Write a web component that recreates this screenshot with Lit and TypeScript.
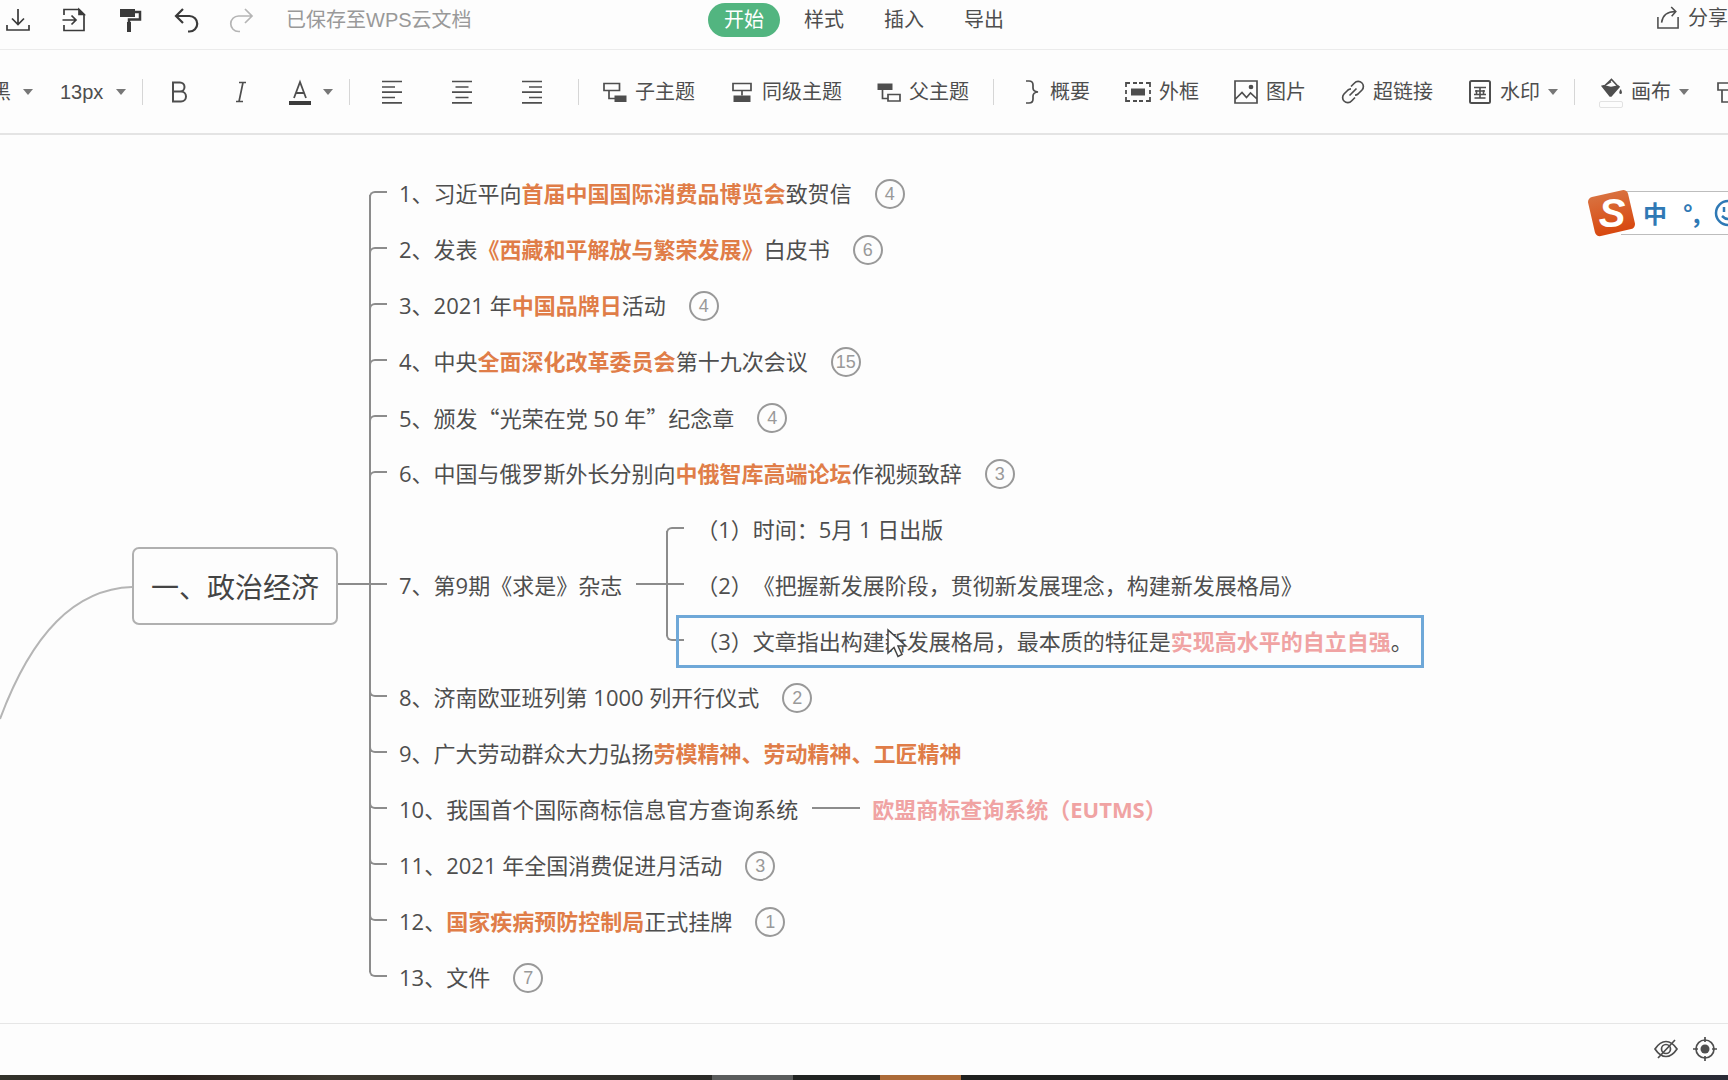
import { LitElement, html, svg, css, nothing, TemplateResult } from "lit";
import { customElement, property, state } from "lit/decorators.js";

type Tone = "orange" | "pink" | "quote";
type Run = string | [Tone, string];

interface Topic {
  runs: Run[];
  count?: number;
  children?: Topic[];
  selected?: boolean;
}

const topics: Topic[] = [
  { runs: ["1、习近平向", ["orange", "首届中国国际消费品博览会"], "致贺信"], count: 4 },
  { runs: ["2、发表", ["orange", "《西藏和平解放与繁荣发展》"], "白皮书"], count: 6 },
  { runs: ["3、2021 年", ["orange", "中国品牌日"], "活动"], count: 4 },
  { runs: ["4、中央", ["orange", "全面深化改革委员会"], "第十九次会议"], count: 15 },
  { runs: ["5、颁发", ["quote", "“"], "光荣在党 50 年", ["quote", "”"], "纪念章"], count: 4 },
  { runs: ["6、中国与俄罗斯外长分别向", ["orange", "中俄智库高端论坛"], "作视频致辞"], count: 3 },
  {
    runs: ["7、第9期《求是》杂志"],
    children: [
      { runs: ["（1）时间：5月 1 日出版"] },
      { runs: ["（2）《把握新发展阶段，贯彻新发展理念，构建新发展格局》"] },
      {
        runs: ["（3）文章指出构建新发展格局，最本质的特征是", ["pink", "实现高水平的自立自强"], "。"],
        selected: true,
      },
    ],
  },
  { runs: ["8、济南欧亚班列第 1000 列开行仪式"], count: 2 },
  { runs: ["9、广大劳动群众大力弘扬", ["orange", "劳模精神、劳动精神、工匠精神"]] },
  { runs: ["10、我国首个国际商标信息官方查询系统"], children: [{ runs: [["pink", "欧盟商标查询系统（EUTMS）"]] }] },
  { runs: ["11、2021 年全国消费促进月活动"], count: 3 },
  { runs: ["12、", ["orange", "国家疾病预防控制局"], "正式挂牌"], count: 1 },
  { runs: ["13、文件"], count: 7 },
];

const shapes: Record<string, TemplateResult> = {
  download: svg`<path d="M12 1v15M6 10.5l6 6 6-6M1 17v5h22v-5"/>`,
  exportDoc: svg`<path d="M2 7V1.5h15l5 5V22.5H2V17M0.500 12h13M9.500 7.500l4.500 4.500-4.500 4.500"/><path d="M17 1.500v5h5z" fill="currentColor"/>`,
  brush: svg`<path d="M2 1h15v8H2zM9 14h4v10H9z" fill="currentColor" stroke="none"/><path d="M17 4h5v7.500H11V15" stroke-width="2.500"/>`,
  undo: svg`<path d="M9 1L2 8l7 7M2 8h13.500a7.500 7.500 0 0 1 0 15.500H14" stroke-width="2.200"/>`,
  redo: svg`<path d="M15 1l7 7-7 7M22 8H8.500a7.500 7.500 0 0 0 0 15.500H10"/>`,
  share: svg`<path d="M1 11v12h22V11M5 17C6 10 11 5 20 5M15.500 0L20.500 5 16 10"/>`,
  bold: svg`<path d="M5 2.500h7a4.500 4.500 0 0 1 0 9H5zM5 11.500h8a5 5 0 0 1 0 10H5z" stroke-width="2"/>`,
  italic: svg`<path d="M10 2.500h7M7 21.500h7M14 2.500l-4 19"/>`,
  alignLeft: svg`<path d="M2 1.500h20M2 7h13M2 12.200h20M2 17.500h13M2 22.800h20"/>`,
  alignCenter: svg`<path d="M2 1.500h20M5.500 7h13M2 12.200h20M5.500 17.500h13M2 22.800h20"/>`,
  alignRight: svg`<path d="M2 1.500h20M9 7h13M2 12.200h20M9 17.500h13M2 22.800h20"/>`,
  child: svg`<path d="M1 3.500h15.500v7H1zM6 10.500v8h6"/><path d="M11.500 15.500h12V22h-12z" fill="currentColor" stroke="none"/>`,
  sibling: svg`<path d="M3 3.500h18v7H3zM12 10.500v5"/><path d="M3.500 15.500h17V22h-17z" fill="currentColor" stroke="none"/>`,
  parent: svg`<path d="M0.500 3.500h15V10h-15z" fill="currentColor" stroke="none"/><path d="M5.500 10v8.500H11M11 14.500h12v6.500H11z"/>`,
  brace: svg`<path d="M8 1h3q4 0 4 4v3q0 3.500 5 4-5 .500-5 4v3q0 4-4 4H8"/>`,
  image: svg`<path d="M1 1h22v22H1zM1 19.500l7-7 4.500 5 4-4.500 6.500 6"/><circle cx="17" cy="7" r="1.500" fill="currentColor"/>`,
  link: svg`<path d="M10 6.500l3.500-3.500a5 5 0 0 1 7.500 7l-4 4a5 5 0 0 1-3 1.200M14 17.500L10.500 21A5 5 0 0 1 3 14l4-4a5 5 0 0 1 3-1.200M8.500 15.500l7-7"/>`,
  watermark: svg`<rect x="2" y="1" width="20" height="22" rx="1.500" stroke-width="2"/><path d="M6 7.500h12M7 11h10M6 14.500h12M6.500 18h11M12 7v11M8.500 10v5M15.500 10v5" stroke-width="1.600"/>`,
  canvas: svg`<path d="M4 9.500L12.500 1.500l7 7.500M7 7l5-3"/><path d="M1 8.500l3-1 8 2 8-1.500 2 1.500-9.500 11h-2zM23 12.500q2 5-.500 5t-.500-5z" fill="currentColor" stroke="none"/>`,
  eyeOff: svg`<path d="M1 12Q6 4.500 12 4.500T23 12Q18 19.500 12 19.500T1 12zM4 21L21 3"/><circle cx="12" cy="12" r="4.500"/>`,
  target: svg`<circle cx="12" cy="12" r="9"/><circle cx="12" cy="12" r="4.500" fill="currentColor" stroke="none"/><path d="M12 0v5M12 19v5M0 12h5M19 12h5"/>`,
  format: svg`<path d="M2 3h22v7H2zM6 10v12h14V10"/>`,
};

const icon = (name: string) =>
  html`<svg class="icon" viewBox="0 0 24 24" aria-hidden="true">${shapes[name]}</svg>`;

const caret = html`<svg class="caret" viewBox="0 0 10 6" aria-hidden="true"><path d="M0 0h10L5 6z"/></svg>`;

const iconStyles = css`
  .icon {
    width: 24px;
    height: 24px;
    flex: none;
    fill: none;
    stroke: currentColor;
    stroke-width: 1.7;
    overflow: visible;
  }
  .caret {
    width: 10px;
    height: 6px;
    flex: none;
    fill: #777;
    pointer-events: none;
  }
  button {
    border: 0;
    padding: 0;
    background: none;
    font: inherit;
    color: inherit;
    white-space: nowrap;
    cursor: pointer;
  }
`;

@customElement("app-header")
export class AppHeader extends LitElement {
  @state() private current = "开始";

  static styles = [
    iconStyles,
    css`
      :host {
        display: grid;
        grid-template-columns: 1fr auto 1fr;
        align-items: center;
        height: 39px;
        padding-bottom: 10px;
        border-bottom: 1px solid #ebebeb;
      }
      .left {
        display: flex;
        align-items: center;
        gap: 32px;
        padding-left: 6px;
        color: #3a3a3a;
      }
      .left button {
        height: 24px;
      }
      .left button:disabled {
        color: #b5b5b5;
      }
      .saved {
        color: #999;
        white-space: nowrap;
      }
      .tabs {
        display: flex;
        gap: 8px;
      }
      .tab {
        height: 34px;
        padding: 0 16px;
        border-radius: 17px;
      }
      .tab.on {
        background: #52b580;
        color: #fff;
      }
      .share {
        display: flex;
        justify-self: end;
        align-items: center;
        gap: 8px;
        padding-bottom: 4px;
      }
      .share .icon {
        height: 22px;
      }
    `,
  ];

  render() {
    return html`
      <div class="left">
        <button aria-label="下载">${icon("download")}</button>
        <button aria-label="导出文件">${icon("exportDoc")}</button>
        <button aria-label="格式刷">${icon("brush")}</button>
        <button aria-label="撤销">${icon("undo")}</button>
        <button aria-label="重做" disabled>${icon("redo")}</button>
        <span class="saved">已保存至WPS云文档</span>
      </div>
      <nav class="tabs">
        ${["开始", "样式", "插入", "导出"].map(
          (t) => html`<button class="tab ${t === this.current ? "on" : ""}" @click=${() => (this.current = t)}>${t}</button>`
        )}
      </nav>
      <button class="share">${icon("share")}分享</button>
    `;
  }
}

@customElement("app-toolbar")
export class AppToolbar extends LitElement {
  static styles = [
    iconStyles,
    css`
      :host {
        display: flex;
        align-items: center;
        gap: 35px;
        height: 83px;
        border-bottom: 2px solid #e4e4e4;
        overflow: hidden;
      }
      :host > * {
        flex: none;
      }
      .pick,
      .tool {
        display: flex;
        align-items: center;
      }
      .pick {
        gap: 12px;
        margin-right: -8px;
      }
      .pick.family {
        margin-left: -9px;
      }
      .tool {
        gap: 8px;
      }
      .tool.more {
        margin-right: -8px;
      }
      select {
        appearance: none;
        border: 0;
        padding: 0;
        background: none;
        font: inherit;
        color: inherit;
      }
      .rule {
        width: 1px;
        height: 26px;
        margin: 0 -11px;
        background: #d6d6d6;
      }
      .style {
        width: 26px;
        height: 24px;
      }
      .color {
        display: flex;
        align-items: center;
        gap: 12px;
        margin-right: -8px;
      }
      .letter {
        width: 22px;
        height: 27px;
        flex: none;
        margin-bottom: -2px;
      }
      .aligns {
        display: flex;
        gap: 35px;
        padding-right: 5px;
      }
      .aligns button {
        width: 35px;
        height: 24px;
      }
      .frame {
        width: 26px;
        height: 20px;
        flex: none;
        stroke: currentColor;
      }
      .fill {
        display: grid;
        gap: 1px;
        margin-top: 3px;
      }
      .fill .icon {
        height: 22px;
      }
      .swatch {
        height: 5px;
        border: 1px solid #e2e2e2;
        border-radius: 2px;
      }
    `,
  ];

  render() {
    return html`
      <label class="pick family"><select aria-label="字体"><option>黑</option></select>${caret}</label>
      <label class="pick"><select aria-label="字号"><option>13px</option></select>${caret}</label>
      <span class="rule"></span>
      <button class="style" aria-label="加粗">${icon("bold")}</button>
      <button class="style" aria-label="斜体">${icon("italic")}</button>
      <button class="color" aria-label="文字颜色">
        <svg class="letter" viewBox="0 0 22 27" aria-hidden="true">
          <path d="M5 19L11 3l6 16M7 14h8" fill="none" stroke="currentColor" stroke-width="1.800"/>
          <path d="M0 22h22v4H0z" fill="#3c3c3c"/>
        </svg>${caret}
      </button>
      <span class="rule"></span>
      <div class="aligns">
        <button aria-label="左对齐">${icon("alignLeft")}</button>
        <button aria-label="居中">${icon("alignCenter")}</button>
        <button aria-label="右对齐">${icon("alignRight")}</button>
      </div>
      <span class="rule"></span>
      <button class="tool">${icon("child")}子主题</button>
      <button class="tool">${icon("sibling")}同级主题</button>
      <button class="tool">${icon("parent")}父主题</button>
      <span class="rule"></span>
      <button class="tool">${icon("brace")}概要</button>
      <button class="tool">
        <svg class="frame" viewBox="0 0 26 20" aria-hidden="true">
          <path d="M1 5V1h4M8 1h4M14 1h4M21 1h4v4M25 8v4M25 15v4h-4M18 19h-4M12 19H8M5 19H1v-4M1 12V8" fill="none" stroke-width="1.800"/>
          <path d="M6 6.500h14v7H6z" fill="currentColor" stroke="none"/>
        </svg>外框
      </button>
      <button class="tool">${icon("image")}图片</button>
      <button class="tool">${icon("link")}超链接</button>
      <button class="tool more">${icon("watermark")}水印${caret}</button>
      <span class="rule"></span>
      <button class="tool more"><span class="fill">${icon("canvas")}<span class="swatch"></span></span>画布${caret}</button>
      <button class="tool" aria-label="风格">${icon("format")}</button>
    `;
  }
}

@customElement("topic-list")
export class TopicList extends LitElement {
  @property({ attribute: false }) items: Topic[] = [];

  static styles = [
    iconStyles,
    css`
      :host {
        display: block;
        position: relative;
        --line: #8c8c8c;
      }
      :host([stem])::before {
        content: "";
        position: absolute;
        left: 0;
        top: 29px;
        bottom: 34px;
        width: 2px;
        background: var(--line);
      }
      ul {
        margin: 0;
        padding: 0;
        list-style: none;
      }
      li {
        display: flex;
        align-items: center;
        min-height: 56px;
      }
      .tick {
        box-sizing: border-box;
        flex: none;
        width: 18px;
        height: 6px;
        margin-right: 12px;
        border: 0 solid var(--line);
      }
      .tick.upper {
        border-top-width: 2px;
        border-left-width: 2px;
        border-top-left-radius: 6px;
      }
      .tick.lower {
        height: 8px;
        margin-bottom: 10px;
        border-bottom-width: 2px;
        border-left-width: 2px;
        border-bottom-left-radius: 6px;
      }
      .tick.middle {
        border-top-width: 2px;
      }
      .label {
        position: relative;
        padding-bottom: 2px;
        line-height: 32px;
        white-space: nowrap;
      }
      .label.selected::after {
        content: "";
        position: absolute;
        inset: -10px -11px -9px -20px;
        border: 3px solid #6fa8d8;
      }
      .orange,
      .pink {
        font-weight: 700;
      }
      .orange {
        color: #e07d48;
      }
      .pink {
        color: #f0a3a3;
      }
      .quote {
        font-family: "Noto Sans CJK SC", sans-serif;
      }
      .count {
        box-sizing: border-box;
        width: 30px;
        height: 30px;
        margin-left: 23px;
        border: 2px solid #999;
        border-radius: 50%;
        color: #999;
        font: 18px/26px "Liberation Sans", sans-serif;
      }
      .link {
        flex: none;
        width: 30px;
        height: 2px;
        margin: 0 0 4px 14px;
        background: var(--line);
      }
      .link.long {
        width: 48px;
        margin-right: 12px;
      }
    `,
  ];

  private side(i: number) {
    const mid = (this.items.length - 1) / 2;
    return i < mid ? "upper" : i > mid ? "lower" : "middle";
  }

  render() {
    const many = this.items.length > 1;
    return html`<ul>
      ${this.items.map((t, i) => {
        const kids = t.children;
        const several = !!kids && kids.length > 1;
        return html`<li>
          ${many ? html`<span class="tick ${this.side(i)}"></span>` : nothing}
          <span class="label ${t.selected ? "selected" : ""}">${t.runs.map((r) =>
            typeof r === "string" ? r : html`<span class=${r[0]}>${r[1]}</span>`
          )}</span>
          ${t.count !== undefined ? html`<button class="count">${t.count}</button>` : nothing}
          ${kids
            ? html`<span class="link ${several ? "" : "long"}"></span>
                <topic-list ?stem=${several} .items=${kids}></topic-list>`
            : nothing}
        </li>`;
      })}
    </ul>`;
  }
}

@customElement("mind-map")
export class MindMap extends LitElement {
  static styles = css`
    :host {
      position: relative;
      display: flex;
      align-items: center;
      padding: 31px 0 17px;
      overflow: hidden;
      color: #4e4e4e;
      font: 22px/32px "Open Sans", "Noto Sans CJK SC", sans-serif;
      text-spacing-trim: space-all;
    }
    .incoming {
      flex: none;
      align-self: center;
      width: 132px;
      height: 268px;
      fill: none;
      stroke: #b5b5b5;
      stroke-width: 2;
    }
    .root {
      flex: none;
      padding: 17px 17px 15px;
      border: 2px solid #b0b0b0;
      border-radius: 7px;
      font-size: 28px;
      line-height: 42px;
      color: #444;
      white-space: nowrap;
    }
    .stem {
      flex: none;
      width: 49px;
      height: 2px;
      margin: 0 -18px 4px 0;
      background: #8c8c8c;
    }
    .pointer {
      position: absolute;
      left: 887px;
      top: 493px;
      width: 22px;
      height: 30px;
      fill: #fff;
      stroke: #444;
      stroke-width: 1.5;
    }
  `;

  render() {
    return html`
      <svg class="incoming" viewBox="0 0 132 268" aria-hidden="true"><path d="M132 135C75 137 32 181 0 267"/></svg>
      <div class="root">一、政治经济</div>
      <span class="stem"></span>
      <topic-list stem .items=${topics}></topic-list>
      <svg class="pointer" viewBox="0 0 22 30" aria-hidden="true"><path d="M1 2v23l6-5.500 4 9 4-2-4-8.500h8z"/></svg>
    `;
  }
}

@customElement("input-bar")
export class InputBar extends LitElement {
  static styles = css`
    :host {
      display: flex;
      align-items: center;
      width: 141px;
      height: 48px;
      overflow: hidden;
      color: #2f79b5;
      font: 700 24px/38px "Noto Sans CJK SC", sans-serif;
    }
    .logo {
      flex: none;
      width: 50px;
      height: 48px;
      z-index: 1;
      overflow: visible;
    }
    .letter {
      font: italic 700 40px "Liberation Sans", sans-serif;
      fill: #fff;
    }
    .strip {
      display: flex;
      align-items: center;
      gap: 16px;
      flex: none;
      width: 160px;
      height: 42px;
      margin-left: -16px;
      padding-left: 22px;
      border: solid #bdbdbd;
      border-width: 1px 0;
      background: #fff;
    }
    .face {
      flex: none;
      width: 28px;
      height: 28px;
      margin-left: -3px;
      fill: none;
      stroke: currentColor;
      stroke-width: 2.5;
    }
  `;

  render() {
    return html`
      <svg class="logo" viewBox="0 0 50 48" aria-hidden="true">
        <defs>
          <linearGradient id="warm" x1="0" y1="0" x2="0" y2="1">
            <stop offset="0" stop-color="#d9713f"/><stop offset="1" stop-color="#d8480f"/>
          </linearGradient>
        </defs>
        <rect x="4" y="4" width="41" height="40" rx="5" fill="url(#warm)" transform="rotate(-13 25 24)"/>
        <text class="letter" x="25" y="38" text-anchor="middle">S</text>
      </svg>
      <div class="strip">
        <span>中</span><span>°,</span>
        <svg class="face" viewBox="0 0 28 28" aria-hidden="true">
          <circle cx="14" cy="14" r="12"/><path d="M10 8v5M18 8v5M8 17q6 6 12 0"/>
        </svg>
      </div>
    `;
  }
}

@customElement("app-root")
export class AppRoot extends LitElement {
  static styles = [
    iconStyles,
    css`
      :host {
        position: relative;
        display: flex;
        flex-direction: column;
        min-height: 100vh;
        overflow: hidden;
        background: #fdfdfd;
        color: #4e4e4e;
        font: 20px/30px "Liberation Sans", "Noto Sans CJK SC", sans-serif;
      }
      mind-map {
        flex: 1;
      }
      input-bar {
        position: absolute;
        top: 189px;
        right: 0;
      }
      footer {
        display: flex;
        justify-content: flex-end;
        align-items: center;
        gap: 15px;
        height: 49px;
        padding: 0 11px 2px 0;
        border-top: 1px solid #e6e6e6;
      }
      footer button {
        height: 24px;
      }
      .edge {
        height: 5px;
        background: linear-gradient(
          90deg,
          #33332b 0,
          #2b211d 10%,
          #3d382f 19%,
          #2a2a27 41.2%,
          #5a5c5c 41.2%,
          #5a5c5c 45.9%,
          #212322 45.9%,
          #212322 50.9%,
          #ab6a38 50.9%,
          #ab6a38 55.6%,
          #1f201e 55.6%,
          #1f2123 78%,
          #2a2b36 100%
        );
      }
    `,
  ];

  render() {
    return html`
      <app-header></app-header>
      <app-toolbar></app-toolbar>
      <mind-map></mind-map>
      <footer>
        <button aria-label="隐藏">${icon("eyeOff")}</button>
        <button aria-label="定位">${icon("target")}</button>
      </footer>
      <div class="edge"></div>
      <input-bar></input-bar>
    `;
  }
}
